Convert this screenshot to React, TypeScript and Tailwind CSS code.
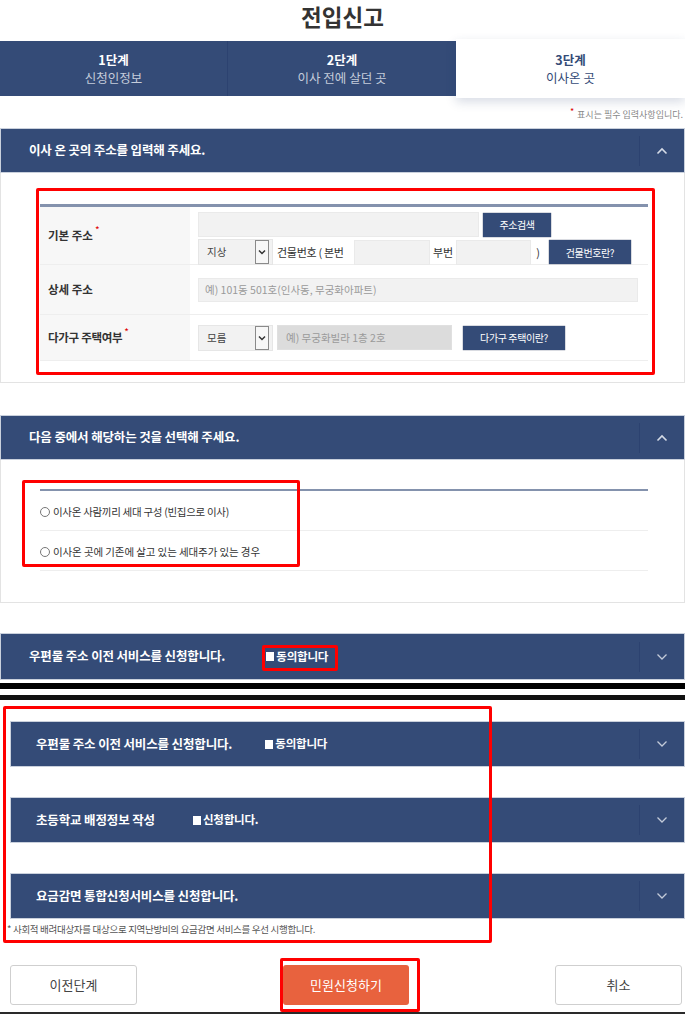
import React from "react";

const FONT = { fontFamily: '"Noto Sans CJK KR", "Noto Sans", sans-serif' };

function Chevron({ up }: { up?: boolean }) {
  return (
    <div className="flex h-full items-center">
      <div className="h-[30px] w-px bg-[#2c4270]" />
      <div className="flex w-[44px] items-center justify-center">
        <svg width="12" height="8" viewBox="0 0 12 8" fill="none">
          {up ? (
            <path d="M1.5 6.5 L6 2 L10.5 6.5" stroke="#d5dbe6" strokeWidth="1.6" />
          ) : (
            <path d="M1.5 1.5 L6 6 L10.5 1.5" stroke="#c3cbd9" strokeWidth="1.3" />
          )}
        </svg>
      </div>
    </div>
  );
}

function Header({
  title,
  extra,
  up,
  h = "h-[45px]",
  pl = "pl-[28px]",
}: {
  title: string;
  extra?: React.ReactNode;
  up?: boolean;
  h?: string;
  pl?: string;
}) {
  return (
    <div className={`flex ${h} items-center bg-[#344b77] border border-[#c9d0dc]`}>
      <div className={`flex flex-1 items-center ${pl}`}>
        <span className="text-[12.5px] font-bold tracking-[-0.15px] text-white">{title}</span>
        {extra}
      </div>
      <Chevron up={up} />
    </div>
  );
}

function Check({ label, ml }: { label: string; ml: string }) {
  return (
    <span className={`flex items-center ${ml} text-[11.5px] font-bold tracking-[-0.2px] text-white`}>
      <span className="mr-[2px] inline-block h-[9px] w-[8px] bg-white" />
      {label}
    </span>
  );
}

function Select({ value }: { value: string }) {
  return (
    <div className="flex h-[26px] w-[75px] items-center justify-between border border-[#e6e6e6] bg-[#f2f2f2] pl-[8px]">
      <span className="text-[10.5px] text-[#444]">{value}</span>
      <div className="mr-[3px] flex h-[24px] w-[14px] items-center justify-center border border-[#8a8a8a] bg-[#f7f7f7]">
        <svg width="8" height="6" viewBox="0 0 8 6">
          <path d="M1 1.5 L4 4.5 L7 1.5" stroke="#333" strokeWidth="1.5" fill="none" />
        </svg>
      </div>
    </div>
  );
}

function BlueBtn({ children, w }: { children: React.ReactNode; w: string }) {
  return (
    <div className={`flex h-[24px] ${w} items-center justify-center bg-[#344b77] text-[10px] tracking-[-0.4px] text-white shadow-[0_0_1px_#1e2e4f]`}>
      {children}
    </div>
  );
}

function Req() {
  return <span className="relative -top-[6px] ml-[2px] text-[10px] text-[#e00000]">*</span>;
}

export default function App() {
  return (
    <div className="relative h-[1014px] w-[685px] overflow-hidden bg-white" style={FONT}>
      {/* Title */}
      <div className="flex h-[41px] justify-center pt-[1px]">
        <span className="text-[22.5px] font-bold leading-[30px] text-[#333]">전입신고</span>
      </div>

      {/* Steps */}
      <div className="relative flex h-[55px]">
        <div className="flex w-[228px] flex-col items-center justify-center bg-[#344b77] border-r border-[#2c4270]">
          <span className="text-[12.5px] font-bold leading-[18px] text-white">1단계</span>
          <span className="text-[12.5px] leading-[18px] text-[#c5cddb]">신청인정보</span>
        </div>
        <div className="flex w-[228px] flex-col items-center justify-center bg-[#344b77]">
          <span className="text-[12.5px] font-bold leading-[18px] text-white">2단계</span>
          <span className="text-[12.5px] leading-[18px] text-[#c5cddb]">이사 전에 살던 곳</span>
        </div>
        <div className="relative z-10 -mt-[2px] flex h-[59px] w-[229px] flex-col items-center justify-center bg-white shadow-[0_4px_10px_rgba(40,60,110,0.18)]">
          <span className="text-[12.5px] font-bold leading-[18px] text-[#344b77]">3단계</span>
          <span className="text-[12.5px] leading-[18px] text-[#344b77]">이사온 곳</span>
        </div>
      </div>

      {/* required note */}
      <div className="flex h-[32px] items-start justify-end pr-[2px] pt-[14px]">
        <span className="text-[9px] leading-[10px] text-[#888]">
          <span className="relative -top-[3px] mr-[3px] text-[#e00000]">*</span>표시는 필수 입력사항입니다.
        </span>
      </div>

      {/* Section 1 */}
      <Header title="이사 온 곳의 주소를 입력해 주세요." up />
      <div className="h-[210px] border border-t-0 border-[#e3e3e3] pl-[39px] pr-[36px] pt-[31px]">
        <div className="h-[3px] bg-[#8492ad]" />
        {/* row 1 */}
        <div className="flex h-[58px] border-b border-[#eeeeee]">
          <div className="flex w-[150px] items-center bg-[#f7f7f7] pl-[8px]">
            <span className="text-[11.5px] font-bold text-[#333]">기본 주소</span>
            <Req />
          </div>
          <div className="flex flex-1 flex-col gap-[2px] pl-[8px] pt-[5px]">
            <div className="flex items-center gap-[4px]">
              <div className="h-[25px] w-[281px] border border-[#eaeaea] bg-[#f2f2f2]" />
              <BlueBtn w="w-[68px]">주소검색</BlueBtn>
            </div>
            <div className="flex items-center">
              <Select value="지상" />
              <span className="ml-[4px] w-[73px] whitespace-nowrap text-[11px] tracking-[-0.3px] text-[#333]">건물번호 ( 본번</span>
              <div className="ml-[4px] h-[25px] w-[76px] border border-[#eaeaea] bg-[#f2f2f2]" />
              <span className="ml-[3px] text-[11px] text-[#333]">부번</span>
              <div className="ml-[3px] h-[25px] w-[75px] border border-[#eaeaea] bg-[#f2f2f2]" />
              <span className="ml-[5px] text-[11px] text-[#333]">)</span>
              <div className="ml-[9px]">
                <BlueBtn w="w-[82px]">건물번호란?</BlueBtn>
              </div>
            </div>
          </div>
        </div>
        {/* row 2 */}
        <div className="flex h-[50px] border-b border-[#eeeeee]">
          <div className="flex w-[150px] items-center bg-[#f7f7f7] pl-[8px]">
            <span className="text-[11.5px] font-bold text-[#333]">상세 주소</span>
          </div>
          <div className="flex flex-1 items-center pl-[8px]">
            <div className="flex h-[24px] w-[440px] items-center border border-[#eaeaea] bg-[#f2f2f2] pl-[6px]">
              <span className="text-[10.5px] tracking-[0px] text-[#9a9a9a]">예) 101동 501호(인사동, 무궁화아파트)</span>
            </div>
          </div>
        </div>
        {/* row 3 */}
        <div className="flex h-[46px] border-b border-[#eeeeee]">
          <div className="flex w-[150px] items-center bg-[#f7f7f7] pl-[8px]">
            <span className="text-[11.5px] font-bold tracking-[-0.3px] text-[#333]">다가구 주택여부</span>
            <Req />
          </div>
          <div className="flex flex-1 items-center pl-[8px]">
            <Select value="모름" />
            <div className="ml-[4px] flex h-[25px] w-[175px] items-center border border-[#e0e0e0] bg-[#dcdcdc] pl-[8px]">
              <span className="text-[10.5px] text-[#9a9a9a]">예) 무궁화빌라 1층 2호</span>
            </div>
            <div className="ml-[11px]">
              <BlueBtn w="w-[102px]">다가구 주택이란?</BlueBtn>
            </div>
          </div>
        </div>
      </div>

      <div className="h-[32px]" />

      {/* Section 2 */}
      <Header title="다음 중에서 해당하는 것을 선택해 주세요." up />
      <div className="h-[143px] border border-t-0 border-[#e3e3e3] pl-[39px] pr-[36px] pt-[29px]">
        <div className="h-[2px] bg-[#8492ad]" />
        <div className="flex h-[40px] items-center border-b border-[#eeeeee] pt-[3px]">
          <span className="mr-[3px] inline-block h-[10px] w-[10px] rounded-full border border-[#777] bg-white" />
          <span className="text-[10.5px] tracking-[-0.3px] text-[#333]">이사온 사람끼리 세대 구성 (빈집으로 이사)</span>
        </div>
        <div className="flex h-[40px] items-center border-b border-[#eeeeee] pt-[3px]">
          <span className="mr-[3px] inline-block h-[10px] w-[10px] rounded-full border border-[#777] bg-white" />
          <span className="text-[10.5px] tracking-[-0.1px] text-[#333]">이사온 곳에 기존에 살고 있는 세대주가 있는 경우</span>
        </div>
      </div>

      <div className="h-[30px]" />

      {/* Section 3 */}
      <Header
        title="우편물 주소 이전 서비스를 신청합니다."
        h="h-[47px]"
        extra={<Check label="동의합니다" ml="ml-[41px]" />}
      />

      {/* black separator lines */}
      <div className="mt-[3px] h-[6px] bg-black" />
      <div className="h-[6px] bg-white" />
      <div className="h-[5px] bg-[#111]" />

      {/* lower sections */}
      <div className="pl-[10px] pt-[21px]">
        <Header
          title="우편물 주소 이전 서비스를 신청합니다."
          h="h-[46px]"
          pl="pl-[25px]"
          extra={<Check label="동의합니다" ml="ml-[33px]" />}
        />
        <div className="h-[30px]" />
        <Header
          title="초등학교 배정정보 작성"
          h="h-[46px]"
          pl="pl-[25px]"
          extra={<Check label="신청합니다." ml="ml-[38px]" />}
        />
        <div className="h-[30px]" />
        <Header title="요금감면 통합신청서비스를 신청합니다." h="h-[46px]" pl="pl-[25px]" />
      </div>
      <div className="pl-[7px] pt-[4px]">
        <p className="text-[9.5px] leading-[12px] tracking-[-0.3px] text-[#555]">* 사회적 배려대상자를 대상으로 지역난방비의 요금감면 서비스를 우선 시행합니다.</p>
      </div>

      {/* buttons */}
      <div className="flex items-center justify-between pl-[10px] pr-[3px] pt-[30px]">
        <div className="flex h-[40px] w-[127px] items-center justify-center rounded-[3px] border border-[#cfcfcf] bg-white text-[13px] text-[#444]">
          이전단계
        </div>
        <div className="flex h-[40px] w-[126px] items-center justify-center rounded-[3px] bg-[#e8623e] text-[13px] text-white">
          민원신청하기
        </div>
        <div className="flex h-[40px] w-[127px] items-center justify-center rounded-[3px] border border-[#cfcfcf] bg-white text-[13px] text-[#444]">
          취소
        </div>
      </div>

      {/* bottom dark line */}
      <div className="absolute bottom-0 left-0 h-[2px] w-full bg-[#2a2a2a]" />

      {/* red annotation boxes (overlay) */}
      <div className="pointer-events-none absolute left-[36px] top-[188px] h-[187px] w-[619px] rounded-[2px] border-[3px] border-[#ff0000]" />
      <div className="pointer-events-none absolute left-[22px] top-[480px] h-[87px] w-[278px] rounded-[2px] border-[3px] border-[#ff0000]" />
      <div className="pointer-events-none absolute left-[262px] top-[645px] h-[26px] w-[76px] rounded-[2px] border-[3px] border-[#ff0000]" />
      <div className="pointer-events-none absolute left-[3px] top-[706px] h-[237px] w-[489px] rounded-[2px] border-[3px] border-[#ff0000]" />
      <div className="pointer-events-none absolute left-[280px] top-[958px] h-[54px] w-[140px] rounded-[2px] border-[3px] border-[#ff0000]" />
    </div>
  );
}
